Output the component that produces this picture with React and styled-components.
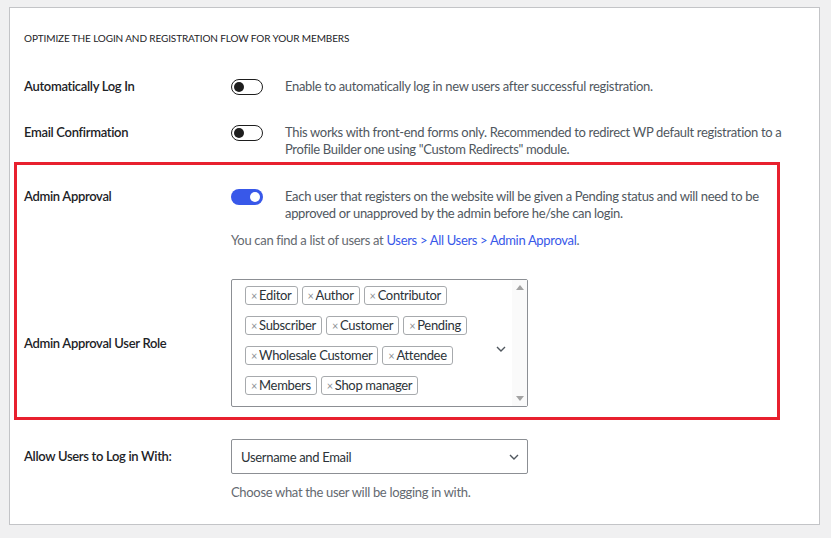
import styled, { createGlobalStyle } from 'styled-components';

const GlobalStyle = createGlobalStyle`
  html, body {
    margin: 0;
    padding: 0;
    background: #f0f0f1;
  }
  body {
    font-family: Lato, "Noto Sans", sans-serif;
    font-size: 13px;
    letter-spacing: -0.32px;
    color: #1d2327;
  }
`;

const Page = styled.div`
  padding: 7px 13px 13px 9px;
`;

const Panel = styled.div`
  background: #fff;
  border: 1px solid #c3c4c7;
  padding: 23px 15px 23px 14px;
  width: 780px;
`;

const Heading = styled.h3`
  margin: 0;
  font-size: 10px;
  line-height: 14px;
  font-weight: 400;
  letter-spacing: -0.12px;
  text-transform: uppercase;
  color: #1d2327;
`;

const Row = styled.div`
  display: grid;
  grid-template-columns: 207px 1fr;
  align-items: ${(p) => (p.$center ? 'center' : 'start')};
  margin-top: ${(p) => p.$top || 0}px;
`;

const Label = styled.div`
  font-weight: 600;
  line-height: 17px;
  color: #1d2327;
`;

const Field = styled.div`
  display: flex;
  flex-direction: column;
`;

const ToggleLine = styled.div`
  display: flex;
  align-items: flex-start;
  gap: 22px;
`;

const Toggle = styled.span`
  flex: none;
  position: relative;
  box-sizing: border-box;
  width: 32px;
  height: 16px;
  margin-top: 1px;
  border-radius: 8px;
  border: ${(p) => (p.$on ? 'none' : '1px solid #1e1e1e')};
  background: ${(p) => (p.$on ? '#3858e9' : '#fff')};

  &::after {
    content: '';
    position: absolute;
    top: ${(p) => (p.$on ? '3px' : '2px')};
    left: ${(p) => (p.$on ? '19px' : '2px')};
    width: 10px;
    height: 10px;
    border-radius: 50%;
    background: ${(p) => (p.$on ? '#fff' : '#1e1e1e')};
  }
`;

const Desc = styled.p`
  margin: 0;
  line-height: 17px;
  color: #50575e;
  max-width: 505px;
`;

const Hint = styled.p`
  margin: ${(p) => p.$top || 0}px 0 0;
  line-height: 17px;
  color: #646970;
`;

const Link = styled.a`
  color: #3858e9;
  text-decoration: none;
`;

const Highlight = styled.div`
  margin: 4px 0 0 -10px;
  width: 753px;
  border: 3px solid #e8202e;
  padding: 23px 0 10px 7px;
`;

const MultiBox = styled.div`
  position: relative;
  box-sizing: border-box;
  width: 297px;
  height: 128px;
  border: 1px solid #8c8f94;
  border-radius: 2px;
  padding: 6px 40px 0 13px;
  display: flex;
  flex-wrap: wrap;
  align-content: flex-start;
  gap: 11px 4px;
`;

const Tag = styled.span`
  display: inline-flex;
  align-items: center;
  box-sizing: border-box;
  height: 19px;
  padding: 0 5px 0 5px;
  border: 1px solid #a7aaad;
  border-radius: 3px;
  background: #fff;
  color: #2c3338;
  line-height: 17px;
`;

const TagX = styled.span`
  color: #8c8f94;
  font-size: 11px;
  margin-right: 2px;
`;

const Scrollbar = styled.div`
  position: absolute;
  top: 0;
  right: 0;
  bottom: 0;
  width: 15px;
  background: #fafafa;
  display: flex;
  flex-direction: column;
  justify-content: space-between;
  align-items: center;
  padding: 5px 0;
  box-sizing: border-box;
`;

const Arrow = styled.span`
  width: 0;
  height: 0;
  border-left: 4px solid transparent;
  border-right: 4px solid transparent;
  ${(p) =>
    p.$up
      ? 'border-bottom: 5px solid #a3a3a3;'
      : 'border-top: 5px solid #a3a3a3;'}
`;

const Caret = styled.svg`
  position: absolute;
  top: ${(p) => p.$top}px;
  right: ${(p) => p.$right}px;
`;

const Select = styled.div`
  position: relative;
  box-sizing: border-box;
  width: 297px;
  height: 35px;
  border: 1px solid #8c8f94;
  border-radius: 2px;
  padding: 0 9px;
  display: flex;
  align-items: center;
  color: #2c3338;
`;

const Chevron = ({ top, right }) => (
  <Caret $top={top} $right={right} width="10" height="6" viewBox="0 0 10 6">
    <path d="M1 1l4 4 4-4" fill="none" stroke="#50575e" strokeWidth="1.4" />
  </Caret>
);

const roles = [
  'Editor',
  'Author',
  'Contributor',
  'Subscriber',
  'Customer',
  'Pending',
  'Wholesale Customer',
  'Attendee',
  'Members',
  'Shop manager',
];

const App = () => (
  <Page>
    <GlobalStyle />
    <Panel>
      <Heading>Optimize the login and registration flow for your members</Heading>

      <Row $top={33}>
        <Label>Automatically Log In</Label>
        <ToggleLine>
          <Toggle />
          <Desc>Enable to automatically log in new users after successful registration.</Desc>
        </ToggleLine>
      </Row>

      <Row $top={29}>
        <Label>Email Confirmation</Label>
        <ToggleLine>
          <Toggle />
          <Desc>
            This works with front-end forms only. Recommended to redirect WP default registration to a
            Profile Builder one using "Custom Redirects" module.
          </Desc>
        </ToggleLine>
      </Row>

      <Highlight>
        <Row>
          <Label>Admin Approval</Label>
          <Field>
            <ToggleLine>
              <Toggle $on />
              <Desc>
                Each user that registers on the website will be given a Pending status and will need to be
                approved or unapproved by the admin before he/she can login.
              </Desc>
            </ToggleLine>
            <Hint $top={10}>
              You can find a list of users at <Link href="#">Users &gt; All Users &gt; Admin Approval</Link>.
            </Hint>
          </Field>
        </Row>

        <Row $center $top={30}>
          <Label>Admin Approval User Role</Label>
          <MultiBox>
            {roles.map((r) => (
              <Tag key={r}>
                <TagX>×</TagX>
                {r}
              </Tag>
            ))}
            <Chevron top={66} right={21} />
            <Scrollbar>
              <Arrow $up />
              <Arrow />
            </Scrollbar>
          </MultiBox>
        </Row>
      </Highlight>

      <Row $center $top={19}>
        <Label>Allow Users to Log in With:</Label>
        <Select>
          Username and Email
          <Chevron top={14} right={8} />
        </Select>
      </Row>
      <Row>
        <span />
        <Hint $top={10}>Choose what the user will be logging in with.</Hint>
      </Row>
    </Panel>
  </Page>
);

export default App;
